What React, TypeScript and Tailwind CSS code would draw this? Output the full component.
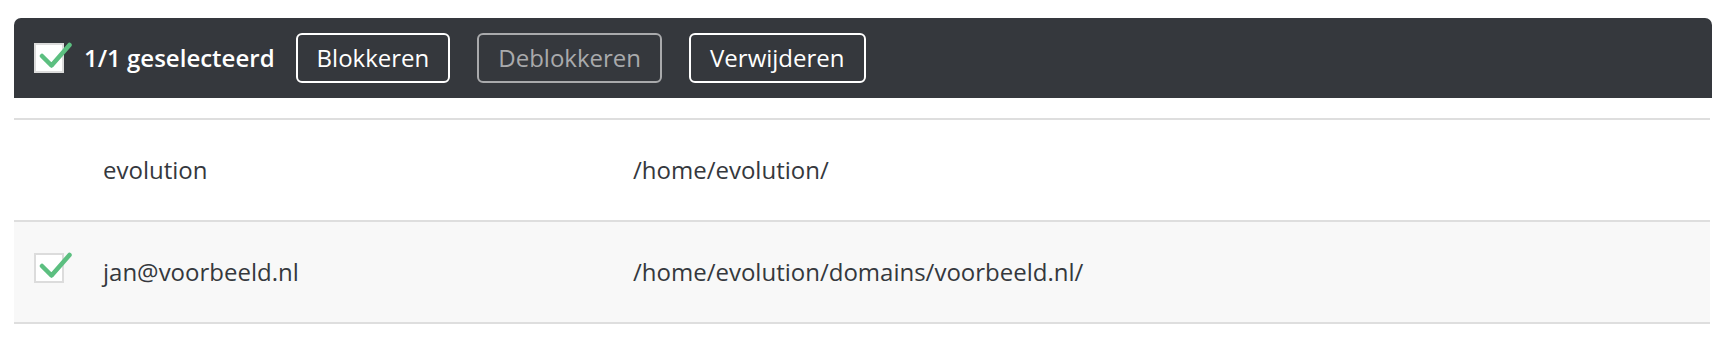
const Check = ({ bg }: { bg: string }) => (
  <span className={`relative inline-block h-[30px] w-[30px] border-2 border-[#dcdcdc] ${bg}`}>
    <svg
      className="absolute left-[2px] top-[-3px]"
      width="34"
      height="28"
      viewBox="0 0 34 28"
      fill="none"
    >
      <path
        d="M4 14 L13.5 23.5 L31.5 3"
        stroke="#5cbf80"
        strokeWidth="4.5"
        strokeLinecap="round"
        strokeLinejoin="round"
      />
    </svg>
  </span>
);

const rows = [
  { name: "evolution", path: "/home/evolution/", selected: false },
  { name: "jan@voorbeeld.nl", path: "/home/evolution/domains/voorbeeld.nl/", selected: true },
];

export default function App() {
  return (
    <div className="min-h-[346px] bg-white px-[14px] pt-[18px] font-['Open_Sans',sans-serif]">
      {/* Selection toolbar */}
      <div className="flex h-[80px] items-center rounded-t-[7px] bg-[#35383d] pl-[20px]">
        <Check bg="bg-white" />
        <span className="ml-[20px] text-[24px] font-semibold text-white">1/1 geselecteerd</span>
        <button className="ml-[21px] h-[50px] rounded-[6px] border-2 border-white px-[19px] text-[24px] text-white">
          Blokkeren
        </button>
        <button className="ml-[27px] h-[50px] rounded-[6px] border-2 border-[#a9aaac] px-[19px] text-[24px] text-[#a9aaac]">
          Deblokkeren
        </button>
        <button className="ml-[27px] h-[50px] rounded-[6px] border-2 border-white px-[19px] text-[24px] text-white">
          Verwijderen
        </button>
      </div>

      {/* Table */}
      <div className="mt-[20px] mr-[2px] border-t-2 border-[#dedede]">
        {rows.map((r) => (
          <div
            key={r.name}
            className={`flex h-[102px] items-center border-b-2 border-[#dedede] text-[24px] text-[#35383d] ${
              r.selected ? "bg-[#f8f8f8]" : "bg-white"
            }`}
          >
            <div className="w-[89px] pl-[20px]">{r.selected && <Check bg="bg-white" />}</div>
            <div className="w-[530px]">{r.name}</div>
            <div>{r.path}</div>
          </div>
        ))}
      </div>
    </div>
  );
}
